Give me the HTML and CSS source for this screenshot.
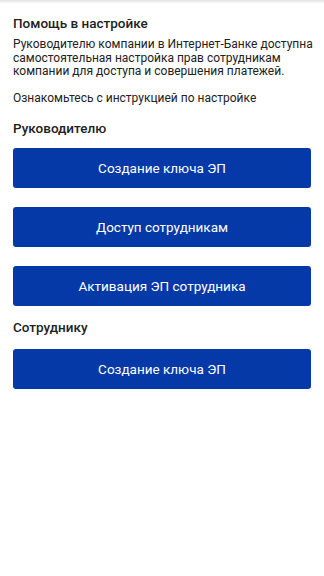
FILE: index.html
```html
<!DOCTYPE html>
<html lang="ru">
<head>
<meta charset="utf-8">
<link rel="stylesheet" href="styles.css">
</head>
<body>
<div class="shadow"></div>
<main class="page">
  <h1 class="title">Помощь в настройке</h1>
  <p class="text">Руководителю компании в Интернет-Банке доступна самостоятельная настройка прав сотрудникам компании для доступа и совершения платежей.</p>
  <p class="text text-gap">Ознакомьтесь с инструкцией по настройке</p>
  <h2 class="section section-first">Руководителю</h2>
  <div class="buttons">
    <button class="btn">Создание ключа ЭП</button>
    <button class="btn">Доступ сотрудникам</button>
    <button class="btn">Активация ЭП сотрудника</button>
  </div>
  <h2 class="section">Сотруднику</h2>
  <div class="buttons">
    <button class="btn">Создание ключа ЭП</button>
  </div>
</main>
</body>
</html>
```
FILE: styles.css
```css
html, body {
  margin: 0;
  padding: 0;
  background: #ffffff;
}
body {
  font-family: Roboto, "Noto Sans", sans-serif;
  color: #212121;
}
.shadow {
  height: 4px;
  background: linear-gradient(#e4e4e4, #ffffff);
}
.page {
  padding: 10px 13px 0 13px;
}
.title {
  margin: 0 0 6px 0;
  font-size: 13.5px;
  font-weight: 500;
  line-height: 18px;
}
.text {
  margin: 0 -10px 0 0;
  font-size: 12px;
  line-height: 13.5px;
}
.text-gap {
  margin-top: 13.5px;
}
.section {
  margin: 12.5px 0 12.5px 0;
  font-size: 13.5px;
  font-weight: 500;
  line-height: 18px;
}
.section-first {
  margin-top: 13.25px;
  margin-bottom: 11px;
}
.buttons {
  display: flex;
  flex-direction: column;
  gap: 19px;
}
.btn {
  display: block;
  width: 100%;
  height: 40px;
  border: none;
  border-radius: 3px;
  background: #0539a7;
  color: #ffffff;
  font-family: Roboto, "Noto Sans", sans-serif;
  font-size: 13.5px;
  padding: 0;
}
```
